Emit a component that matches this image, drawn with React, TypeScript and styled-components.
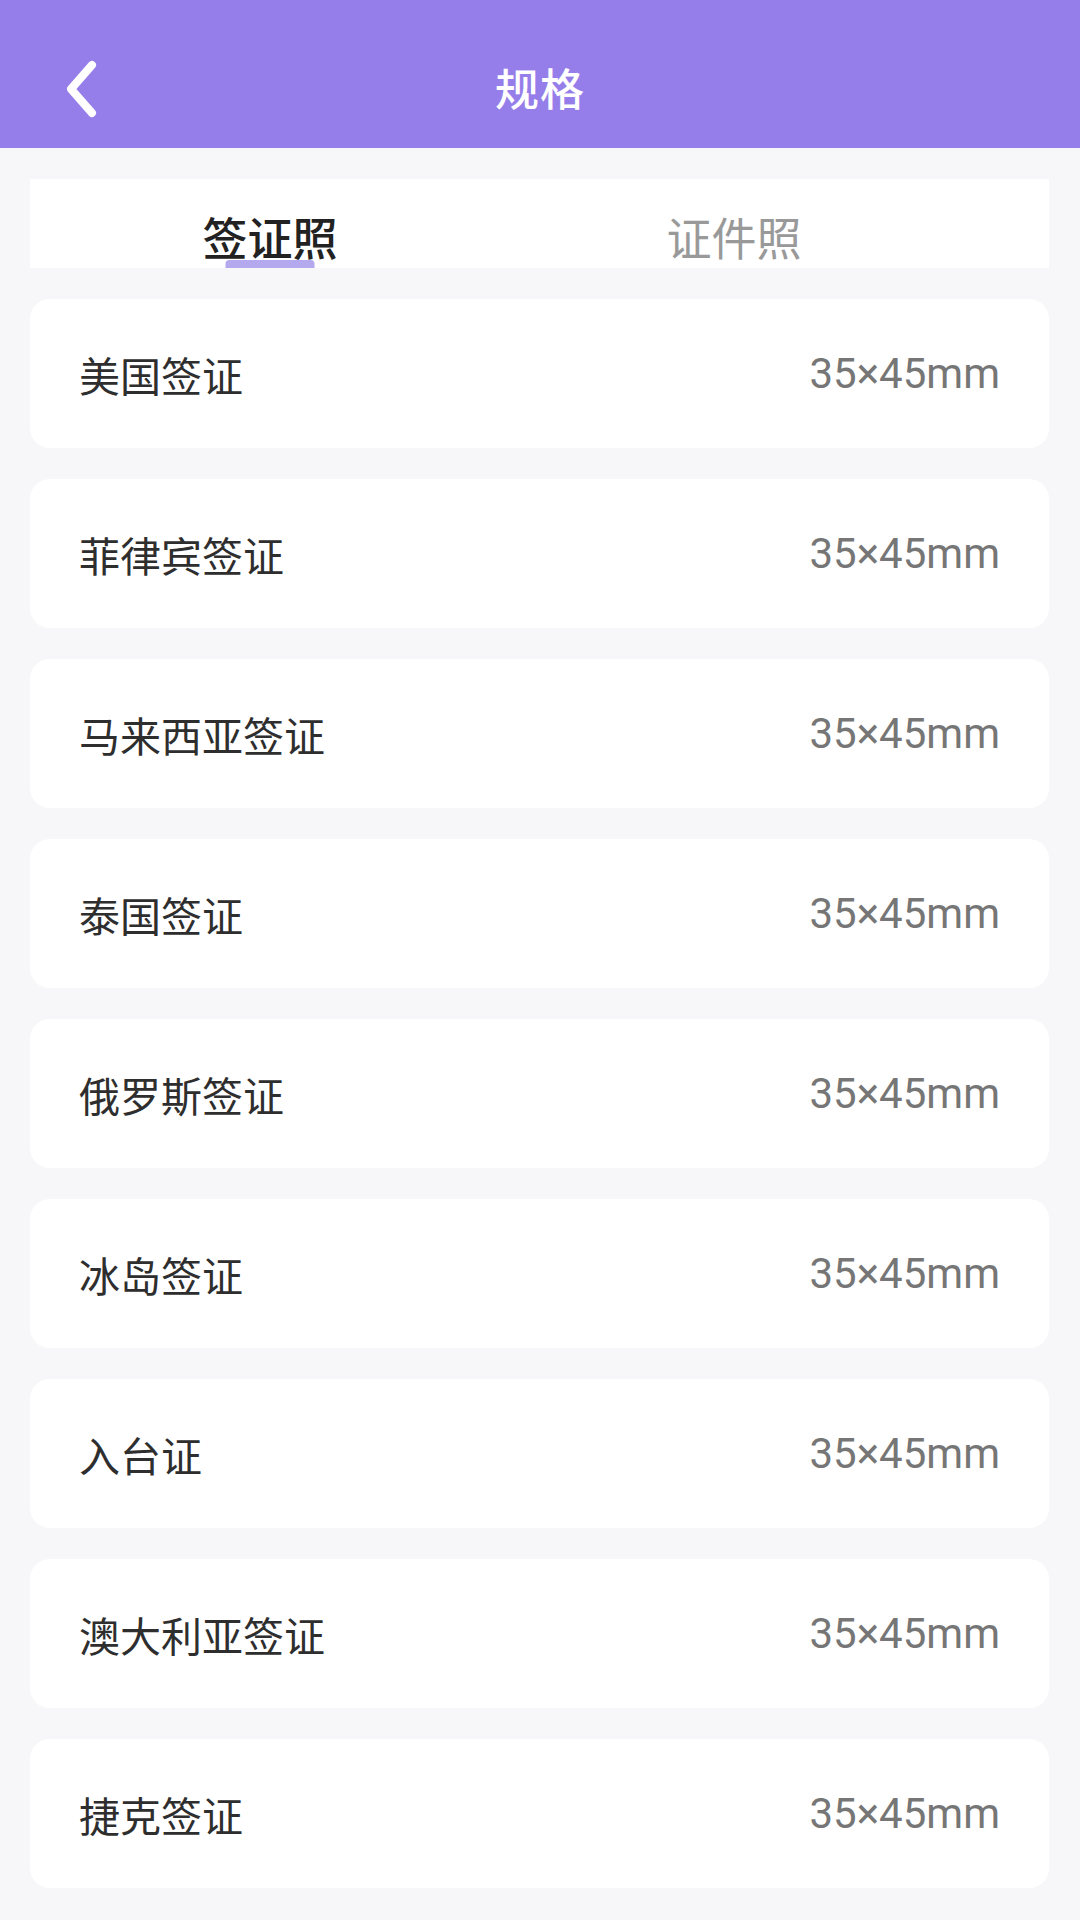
import React, { useState } from "react";
import styled, { createGlobalStyle } from "styled-components";

const GlobalStyle = createGlobalStyle`
  * {
    box-sizing: border-box;
  }
  body {
    margin: 0;
    background: #f7f7f9;
    font-family: "Noto Sans CJK SC", "Noto Sans", sans-serif;
  }
`;

const Page = styled.div`
  width: 1080px;
  min-height: 1920px;
  background: #f7f7f9;
`;

const Header = styled.header`
  height: 148px;
  padding-top: 26px;
  background: #967eea;
  display: flex;
  align-items: center;
  justify-content: center;
  position: relative;
`;

const BackButton = styled.button`
  position: absolute;
  left: 58px;
  top: 56px;
  width: 46px;
  height: 66px;
  padding: 0;
  border: none;
  background: none;
  display: flex;
  align-items: center;
  justify-content: center;
`;

const Title = styled.h1`
  margin: 0;
  font-size: 44px;
  font-weight: 500;
  color: #fff;
  letter-spacing: 1px;
`;

const Content = styled.main`
  padding: 31px 31px 0 30px;
  display: flex;
  flex-direction: column;
  gap: 31px;
`;

const TabBar = styled.div`
  height: 89px;
  background: #fff;
  display: flex;
  padding-left: 8px;
`;

const Tab = styled.div<{ $active: boolean }>`
  width: 464px;
  position: relative;
  display: flex;
  align-items: flex-end;
  justify-content: center;
  padding-bottom: 4px;
  font-size: 45px;
  line-height: 1.2;
  font-weight: ${(p) => (p.$active ? 500 : 400)};
  color: ${(p) => (p.$active ? "#222" : "#999")};
  cursor: pointer;
`;

const Underline = styled.span`
  position: absolute;
  bottom: 0;
  left: 50%;
  transform: translateX(-50%);
  width: 89px;
  height: 8px;
  border-radius: 4px 4px 0 0;
  background: #b4a9ee;
`;

const List = styled.div`
  display: flex;
  flex-direction: column;
  gap: 31px;
  padding-bottom: 31px;
`;

const Card = styled.div`
  height: 149px;
  background: #fff;
  border-radius: 20px;
  padding: 0 49px;
  display: flex;
  align-items: center;
  justify-content: space-between;
`;

const CardName = styled.span`
  font-size: 41px;
  color: #2e2e2e;
`;

const CardSize = styled.span`
  font-family: Roboto, "Noto Sans CJK SC", sans-serif;
  font-size: 42px;
  color: #767676;
`;

const visas = [
  "美国签证",
  "菲律宾签证",
  "马来西亚签证",
  "泰国签证",
  "俄罗斯签证",
  "冰岛签证",
  "入台证",
  "澳大利亚签证",
  "捷克签证",
];

const App: React.FC = () => {
  const [tab, setTab] = useState(0);
  return (
    <Page>
      <GlobalStyle />
      <Header>
        <BackButton aria-label="back">
          <svg width="36" height="60" viewBox="0 0 36 60">
            <path
              d="M29 6 L8 30 L29 54"
              fill="none"
              stroke="#fff"
              strokeWidth="8"
              strokeLinecap="round"
              strokeLinejoin="round"
            />
          </svg>
        </BackButton>
        <Title>规格</Title>
      </Header>
      <Content>
        <TabBar>
          {["签证照", "证件照"].map((label, i) => (
            <Tab key={label} $active={tab === i} onClick={() => setTab(i)}>
              {label}
              {tab === i && <Underline />}
            </Tab>
          ))}
        </TabBar>
        <List>
          {visas.map((name) => (
            <Card key={name}>
              <CardName>{name}</CardName>
              <CardSize>35×45mm</CardSize>
            </Card>
          ))}
        </List>
      </Content>
    </Page>
  );
};

export default App;
